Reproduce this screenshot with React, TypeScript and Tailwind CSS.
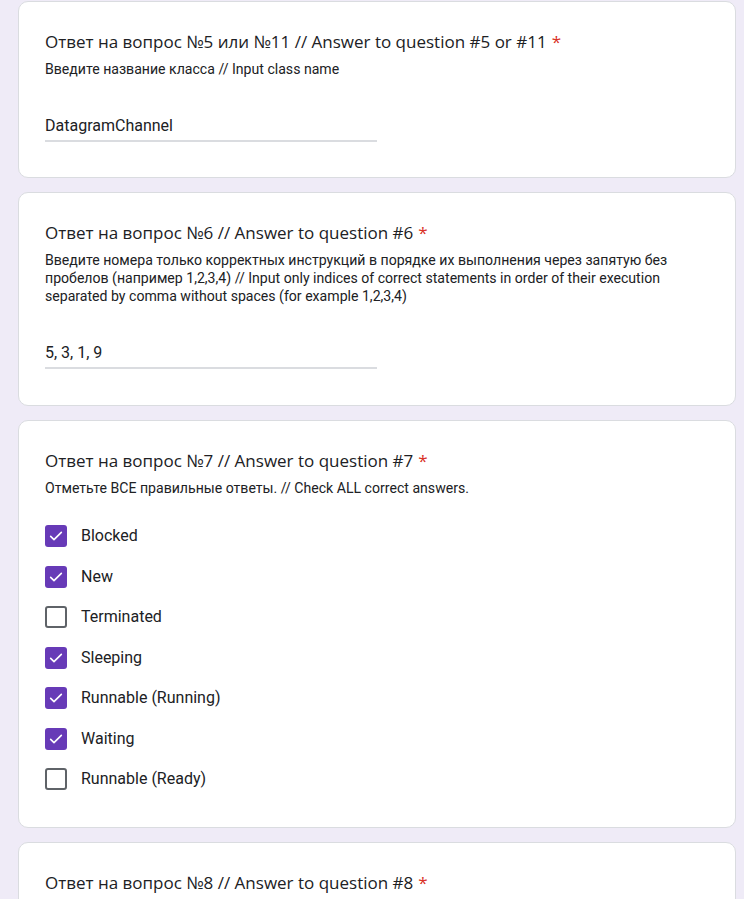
const sans = { fontFamily: 'Roboto, "Liberation Sans", sans-serif' };

function Title({ children }: { children: React.ReactNode }) {
  return (
    <div className="text-[17px] leading-6 text-[#202124] font-['Open_Sans',Roboto,sans-serif]">
      {children}
      <span className="text-[#d93025] ml-[5px]">*</span>
    </div>
  );
}

function Desc({ children }: { children: React.ReactNode }) {
  return <div className="mt-[6px] text-[14.1px] leading-[18px] text-[#202124]">{children}</div>;
}

function TextAnswer({ value }: { value: string }) {
  return (
    <div className="mt-[36px] w-[332px] border-b-2 border-[#dadce0] pb-[2px]">
      <div className="text-[16px] leading-6 text-[#202124]">{value}</div>
    </div>
  );
}

function Box({ checked }: { checked: boolean }) {
  if (checked) {
    return (
      <div className="w-[22px] h-[22px] rounded-[3px] bg-[#673ab7] flex items-center justify-center">
        <svg width="16" height="16" viewBox="0 0 24 24" fill="none">
          <path d="M4 12.5l5 5L20 6.5" stroke="white" strokeWidth="2.4" strokeLinecap="round" strokeLinejoin="round" />
        </svg>
      </div>
    );
  }
  return <div className="w-[22px] h-[22px] rounded-[3px] border-2 border-[#5f6368] bg-white" />;
}

const options = [
  { label: 'Blocked', checked: true },
  { label: 'New', checked: true },
  { label: 'Terminated', checked: false },
  { label: 'Sleeping', checked: true },
  { label: 'Runnable (Running)', checked: true },
  { label: 'Waiting', checked: true },
  { label: 'Runnable (Ready)', checked: false },
];

export default function App() {
  return (
    <div className="min-h-screen bg-[#efebf7] pl-[18px] pr-[8px] pt-[1px] flex flex-col gap-[14px]" style={sans}>
      <div className="bg-white border border-[#dadce0] rounded-[10px] pl-[26px] pr-6 pt-[28px] pb-[35px]">
        <Title>Ответ на вопрос №5 или №11 // Answer to question #5 or #11</Title>
        <Desc>Введите название класса // Input class name</Desc>
        <TextAnswer value="DatagramChannel" />
      </div>

      <div className="bg-white border border-[#dadce0] rounded-[10px] pl-[26px] pr-6 pt-[28px] pb-[36px]">
        <Title>Ответ на вопрос №6 // Answer to question #6</Title>
        <Desc>
          <div className="max-w-[640px]">
            Введите номера только корректных инструкций в порядке их выполнения через запятую без пробелов (например
            1,2,3,4) // Input only indices of correct statements in order of their execution separated by comma without
            spaces (for example 1,2,3,4)
          </div>
        </Desc>
        <TextAnswer value="5, 3, 1, 9" />
      </div>

      <div className="bg-white border border-[#dadce0] rounded-[10px] pl-[26px] pr-6 pt-[28px] pb-[27px]">
        <Title>Ответ на вопрос №7 // Answer to question #7</Title>
        <Desc>Отметьте ВСЕ правильные ответы. // Check ALL correct answers.</Desc>
        <div className="mt-[19px] flex flex-col">
          {options.map((o) => (
            <div key={o.label} className="h-[40.5px] flex items-center gap-[14px]">
              <Box checked={o.checked} />
              <span className="text-[16px] text-[#202124]">{o.label}</span>
            </div>
          ))}
        </div>
      </div>

      <div className="bg-white border border-[#dadce0] rounded-[10px] pl-[26px] pr-6 pt-[28px] pb-[37px]">
        <Title>Ответ на вопрос №8 // Answer to question #8</Title>
        <Desc>&nbsp;</Desc>
      </div>
    </div>
  );
}
